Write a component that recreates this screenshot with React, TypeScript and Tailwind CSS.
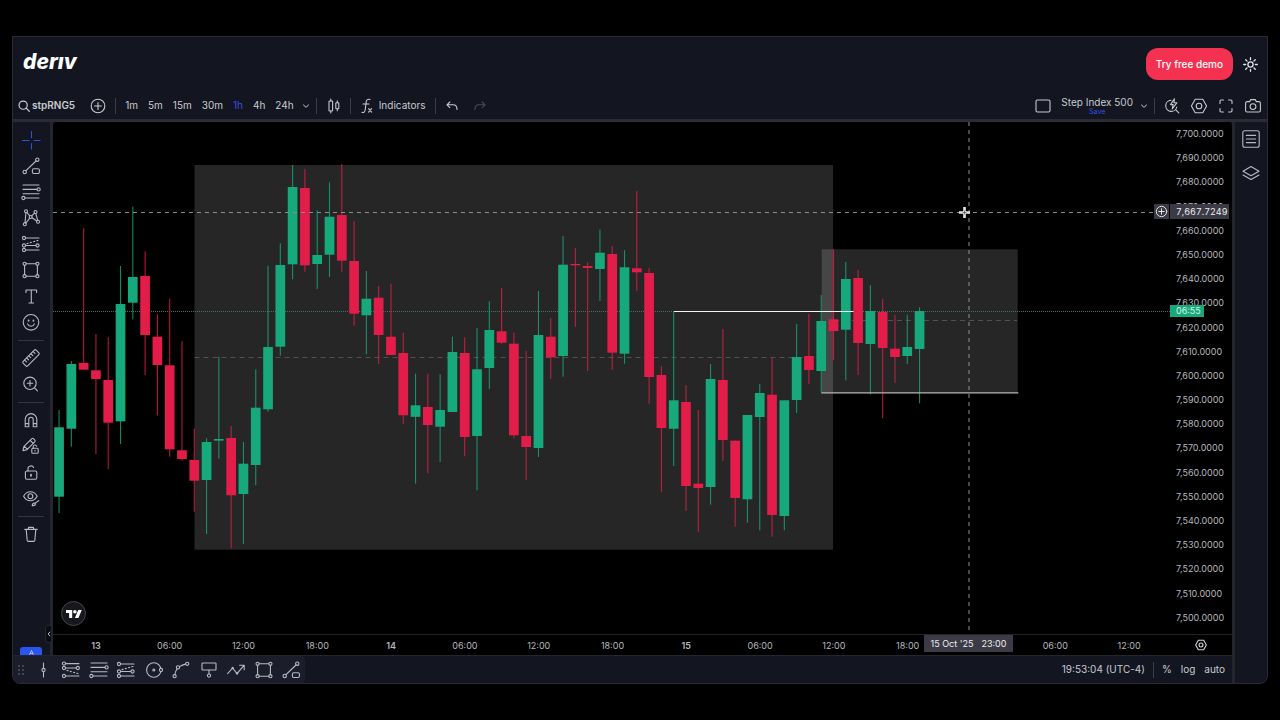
import type { ReactNode } from "react";

type Candle = ["u" | "d", number, number, number, number];

// direction, high, body top, body bottom, low (in plot units)
const CANDLES: Candle[] = [
  ["u", 410, 427.3, 496.7, 513],
  ["u", 361, 364, 428.7, 446.7],
  ["d", 228.3, 363, 369.7, 369.7],
  ["d", 334, 370.3, 379, 454],
  ["d", 337.3, 380, 422.7, 469.3],
  ["u", 266, 304, 421.3, 444],
  ["u", 206.7, 277, 302.7, 319.3],
  ["d", 251.3, 276, 335, 375],
  ["d", 314.3, 336.7, 365, 415.3],
  ["d", 298.7, 365.3, 449.3, 456.7],
  ["d", 341.3, 450.3, 459, 460.7],
  ["d", 428.7, 460, 480.7, 511.7],
  ["u", 438.3, 442, 480, 534],
  ["u", 356.7, 439, 440.6, 458.7],
  ["d", 426, 438, 495.3, 548.3],
  ["u", 442, 463.7, 494, 544],
  ["u", 369.3, 407.7, 465, 485.3],
  ["u", 265.7, 347, 409.3, 411.7],
  ["u", 243.3, 265, 346.7, 355.7],
  ["u", 165, 187, 264.3, 279.3],
  ["d", 169, 188, 265.3, 271.7],
  ["u", 210.3, 255, 264, 289],
  ["u", 182.3, 216.7, 254.7, 277],
  ["d", 164, 215, 260.7, 271.7],
  ["d", 221.3, 261, 313.7, 325.7],
  ["u", 271, 298.7, 315.3, 354.3],
  ["d", 286, 297.7, 335, 364],
  ["d", 283.7, 336.7, 355, 355],
  ["d", 332.7, 353, 415.3, 424],
  ["u", 373.7, 405.3, 416.8, 483.7],
  ["d", 373.7, 407, 425, 473.3],
  ["u", 374.3, 410, 426.7, 462],
  ["u", 336.7, 352, 412, 412],
  ["d", 337.3, 353, 437, 456.3],
  ["u", 328, 369.3, 436, 490.3],
  ["u", 301.3, 330, 368, 389],
  ["d", 288, 331.3, 342.7, 343.7],
  ["d", 332.7, 343.7, 435.3, 438.3],
  ["d", 351, 436, 447, 480.3],
  ["u", 291, 335, 448, 457],
  ["d", 318, 336.7, 357.3, 378.7],
  ["u", 236, 264.7, 356, 376.7],
  ["d", 248, 264, 265.3, 327],
  ["d", 262.3, 266, 268, 371],
  ["u", 229.7, 252.7, 269, 301],
  ["d", 246, 254, 352.7, 369.7],
  ["u", 250.3, 267.3, 353.7, 363.7],
  ["d", 191, 268.3, 272.3, 290.7],
  ["d", 268, 273, 377, 403.7],
  ["d", 366.3, 375, 428, 491.7],
  ["u", 311.3, 400.3, 428.7, 466],
  ["d", 385, 402, 486, 511],
  ["d", 410, 483.7, 488, 531.7],
  ["u", 364, 379, 487, 504.7],
  ["d", 329, 380, 440, 461],
  ["d", 440.3, 440.7, 498, 526.7],
  ["u", 415, 415, 499.3, 522.7],
  ["u", 384, 393, 417, 530.3],
  ["d", 357.7, 394.7, 515, 536.7],
  ["u", 400.3, 400.3, 516, 530.3],
  ["u", 324, 357, 400, 413],
  ["d", 313.7, 356, 370, 384],
  ["u", 295, 321, 371, 392.3],
  ["d", 249.3, 319.3, 331, 360],
  ["u", 262, 279, 329.7, 380.3],
  ["d", 269.7, 278, 343, 375],
  ["u", 285.3, 311, 344, 394.3],
  ["d", 298.7, 312, 348, 418.3],
  ["d", 314.7, 348.7, 357, 383],
  ["u", 314.7, 347, 356, 364],
  ["u", 307.3, 311, 349, 403.3],
];

const FIRST_X = 59;
const STEP = 12.293;

const PRICES = Array.from(
  { length: 21 },
  (_, i) => `7,${700 - i * 10}.0000`,
);

const TIMES = [
  "13", "06:00", "12:00", "18:00",
  "14", "06:00", "12:00", "18:00",
  "15", "06:00", "12:00", "18:00",
  "", "06:00", "12:00",
];

const INTERVALS = ["1m", "5m", "15m", "30m", "1h", "4h", "24h"];

function Icon({ children, className = "size-5" }: { children: ReactNode; className?: string }) {
  return (
    <svg
      viewBox="0 0 20 20"
      className={className}
      fill="none"
      stroke="currentColor"
      strokeWidth="1.1"
      strokeLinecap="round"
      strokeLinejoin="round"
      aria-hidden="true"
    >
      {children}
    </svg>
  );
}

const CrossIcon = () => (
  <Icon>
    <path d="M10.500 1.500v6M10.500 13.500v5.500M1.500 10.500h6.500M13 10.500h6" />
  </Icon>
);
const TrendIcon = () => (
  <Icon>
    <circle cx="16.3" cy="3.7" r="1.7" />
    <circle cx="3.7" cy="16" r="1.7" />
    <path d="M15 5 5 14.7" />
    <rect x="11.4" y="12.7" width="7" height="4.8" rx="1.4" />
  </Icon>
);
const FibIcon = () => (
  <Icon>
    <path d="M2 3h16M2 7.4h13.9M2 11.7h16M4.1 16H18" />
    <circle cx="17.6" cy="7.4" r="1.6" />
    <circle cx="2.4" cy="16" r="1.6" />
  </Icon>
);
const PatternIcon = () => (
  <Icon>
    <circle cx="5" cy="3.2" r="1.5" />
    <circle cx="14.5" cy="4" r="1.5" />
    <circle cx="9.7" cy="9" r="1.5" />
    <circle cx="3.8" cy="16.2" r="1.5" />
    <circle cx="17" cy="13.8" r="1.5" />
    <path d="M4.9 4.7 4 14.7M5.9 4.4l2.9 3.5M10.7 7.8l2.8-2.7M14.8 5.5l1.9 6.8M8.7 10.2l-3.9 4.9M11.1 9.8l4.6 3.2" />
  </Icon>
);
const ForecastIcon = () => (
  <Icon>
    <circle cx="3" cy="4" r="1.6" />
    <circle cx="3" cy="11.5" r="1.6" />
    <circle cx="3" cy="16" r="1.6" />
    <circle cx="16.5" cy="11.5" r="1.6" />
    <path d="M4.6 4H18M4.6 11.5h10.3M4.6 16H18" />
    <path d="M6 9.600 17 6.400" strokeDasharray="1.2 2.2" />
  </Icon>
);
const PositionIcon = () => (
  <Icon>
    <circle cx="3" cy="3.6" r="1.6" />
    <circle cx="16.8" cy="8" r="1.6" />
    <circle cx="3" cy="8" r="1.6" />
    <circle cx="3" cy="16" r="1.6" />
    <path d="M4.6 3.6H18M4.6 8h10.6M4.6 16H18" />
    <path d="m6 10.4 11 3.2" strokeDasharray="1.2 2.2" />
  </Icon>
);
const RectIcon = () => (
  <Icon>
    <circle cx="3.6" cy="3.8" r="1.6" />
    <circle cx="16.4" cy="3.8" r="1.6" />
    <circle cx="3.6" cy="16.2" r="1.6" />
    <circle cx="16.4" cy="16.2" r="1.6" />
    <path d="M5.2 3.8h9.6M5.2 16.2h9.6M3.6 5.4v9.2M16.4 5.4v9.2" />
  </Icon>
);
const TextIcon = () => (
  <Icon>
    <path d="M5 6.400V4h10.600v2.400M10.300 4v13M8 17h4.600" />
  </Icon>
);
const SmileIcon = () => (
  <Icon>
    <circle cx="10" cy="10.3" r="7.8" />
    <path d="M7.6 8.300v.6M12.4 8.300v.6" strokeWidth="1.6" />
    <path d="M6.6 11.900c.6 1.600 1.800 2.300 3.400 2.300s2.800-.7 3.400-2.300" />
  </Icon>
);
const RulerIcon = () => (
  <Icon>
    <g transform="rotate(-45 10 10)">
      <rect x="0.8" y="6.8" width="18.4" height="6.4" rx="1.3" />
      <path d="M4 7v2.6M7 7v2.6M10 7v2.6M13 7v2.6M16 7v2.6" />
    </g>
  </Icon>
);
const ZoomInIcon = () => (
  <Icon>
    <circle cx="9" cy="9.3" r="6.2" />
    <path d="m13.5 13.8 3 3M9 6.6V12M6.3 9.3h5.4" />
  </Icon>
);
const MagnetIcon = () => (
  <Icon>
    <path d="M4.2 16.8V9.4a5.8 5.8 0 0 1 11.6 0v7.4h-3.6V9.5a2.2 2.2 0 0 0-4.4 0v7.3zM4.2 13.6h3.6M12.2 13.6h3.6" />
  </Icon>
);
const PencilLockIcon = () => (
  <Icon>
    <path d="m2 14.6.8-4L10.6 2.8a1.5 1.5 0 0 1 2.1 0l1 1a1.5 1.5 0 0 1 0 2.1L6 13.7zM9.2 4.4l3 3M3.4 10.4l3 3" />
    <rect x="10.8" y="12.2" width="6.4" height="5" rx="1" />
    <path d="M12.2 12.2v-1.6c0-2 3-2.2 3.4-.4M14 14.4v.6" />
  </Icon>
);
const LockIcon = () => (
  <Icon>
    <rect x="4.400" y="9" width="11.400" height="8.200" rx="1.400" />
    <path d="M7 9V6.800c0-3.400 4.600-3.800 5.600-1.200" />
    <path d="M10 12.600v1.200" strokeWidth="1.800" />
  </Icon>
);
const EyeIcon = () => (
  <Icon>
    <path d="M2.6 8.2c3.2-6 10.4-6 13.6 0-3.2 6-10.4 6-13.6 0z" />
    <circle cx="9.4" cy="8.2" r="2.4" />
    <path d="M11.2 17.6c.2-1.8 1-2.6 2-2.6s1.6 1.2.8 2c-.6.6-1.6.7-2.8.6zM14.4 15l3.4-2.4" />
  </Icon>
);
const TrashIcon = () => (
  <Icon>
    <path d="M3.800 5.400h12.400M7.200 5.400l.4-2h4.800l.4 2M5.200 5.400l1 11c.1.7.5 1 1.100 1h5.400c.6 0 1-.3 1.100-1l1-11" />
  </Icon>
);
const VLineIcon = () => (
  <Icon>
    <circle cx="9.500" cy="10" r="1.6" />
    <path d="M9.500 3v5.400M9.500 11.600V17" />
  </Icon>
);
const CircleIcon = () => (
  <Icon>
    <circle cx="9.8" cy="10" r="7.2" />
    <circle cx="9.8" cy="10" r="1" />
    <circle cx="17" cy="10" r="1.6" className="fill-[#1b1e2a]" />
  </Icon>
);
const CurveIcon = () => (
  <Icon>
    <circle cx="3.6" cy="16.2" r="1.6" />
    <circle cx="7" cy="7.4" r="1.6" />
    <circle cx="16.2" cy="3.8" r="1.6" />
    <path d="M3.9 14.6C4.3 12 5 10.4 6.1 8.8M8.5 6.6c1.8-1.2 3.6-2 6.1-2.5" />
  </Icon>
);
const NoteIcon = () => (
  <Icon>
    <rect x="3" y="3" width="14" height="7" rx="0.6" />
    <circle cx="10" cy="15.6" r="1.6" />
    <path d="M10 10v4" />
  </Icon>
);
const ZigzagIcon = () => (
  <Icon>
    <path d="m1.6 13.6 5-5.6 4.4 5.6 7-8.2M13.6 5.2h4.6v4.6" />
    <path d="m6.6 8 .1.1M11 13.4l.1.1" strokeWidth="2.4" />
  </Icon>
);
const GearIcon = ({ className, strokeWidth = 1.1 }: { className?: string; strokeWidth?: number }) => (
  <Icon className={className}>
    <g strokeWidth={strokeWidth}>
      <path d="M6.2 3.2h7.6L17.6 10l-3.8 6.8H6.2L2.4 10z" />
      <circle cx="10" cy="10" r="2.8" />
    </g>
  </Icon>
);

const TOOL_GROUPS: { label: string; icon: ReactNode; active?: boolean }[][] = [
  [
    { label: "Cross", icon: <CrossIcon />, active: true },
    { label: "Trend line", icon: <TrendIcon /> },
    { label: "Fib retracement", icon: <FibIcon /> },
    { label: "Patterns", icon: <PatternIcon /> },
    { label: "Forecast", icon: <ForecastIcon /> },
    { label: "Rectangle", icon: <RectIcon /> },
    { label: "Text", icon: <TextIcon /> },
    { label: "Icons", icon: <SmileIcon /> },
  ],
  [
    { label: "Measure", icon: <RulerIcon /> },
    { label: "Zoom in", icon: <ZoomInIcon /> },
  ],
  [
    { label: "Magnet", icon: <MagnetIcon /> },
    { label: "Stay in drawing mode", icon: <PencilLockIcon /> },
    { label: "Lock drawings", icon: <LockIcon /> },
    { label: "Hide drawings", icon: <EyeIcon /> },
  ],
  [{ label: "Remove", icon: <TrashIcon /> }],
];

const FAVORITES: { label: string; icon: ReactNode }[] = [
  { label: "Vertical line", icon: <VLineIcon /> },
  { label: "Long position", icon: <PositionIcon /> },
  { label: "Fib lines", icon: <FibIcon /> },
  { label: "Short position", icon: <ForecastIcon /> },
  { label: "Circle", icon: <CircleIcon /> },
  { label: "Curve", icon: <CurveIcon /> },
  { label: "Callout", icon: <NoteIcon /> },
  { label: "Path", icon: <ZigzagIcon /> },
  { label: "Rectangle", icon: <RectIcon /> },
  { label: "Trend line", icon: <TrendIcon /> },
];

function Divider() {
  return <span className="h-4 w-px shrink-0 bg-[#3a3c48]" />;
}

function Header() {
  return (
    <header className="flex h-[54px] items-center justify-between pr-[7px] pl-[10px]">
      <a
        href="#home"
        aria-label="deriv"
        className="pb-1 text-[21px] leading-6 font-extrabold text-white italic"
      >
        derıv
      </a>
      <div className="flex items-center gap-[7px]">
        <button className="h-8 rounded-xl bg-[#f53151] px-[10px] text-[10px] font-medium text-white">
          Try free demo
        </button>
        <button aria-label="Theme" className="text-[#e4e5ea]">
          <Icon>
            <circle cx="10.500" cy="10.500" r="2.600" strokeWidth="1.300" />
            <path
              strokeWidth="1.300"
              d="M10.500 3.700v2M10.500 15.300v2M3.700 10.500h2M15.300 10.500h2M5.700 5.700l1.400 1.400M13.900 13.900l1.400 1.400M5.700 15.300l1.400-1.400M13.900 7.100l1.400-1.400"
            />
          </Icon>
        </button>
      </div>
    </header>
  );
}

function Toolbar() {
  return (
    <div className="flex h-7 items-center justify-between pt-px pr-1 pl-[5px] text-[10px] text-[#c8cad1]">
      <div className="flex items-center">
        <button className="flex items-center gap-[2px] font-semibold">
          <Icon className="size-3">
            <circle cx="8.6" cy="8.6" r="6.8" strokeWidth="2" />
            <path d="m13.6 13.6 5.2 5.2" strokeWidth="2" />
          </Icon>
          stpRNG5
        </button>
        <button aria-label="Compare" className="ml-[13px]">
          <Icon>
            <circle cx="10" cy="10" r="6.8" />
            <path d="M10 6.6v6.8M6.6 10h6.8" />
          </Icon>
        </button>
        <span className="ml-[7px] flex"><Divider /></span>
        <div className="ml-[9px] flex gap-[10px]">
          {INTERVALS.map((t) => (
            <button key={t} className={t === "1h" ? "text-[#3350e0]" : ""}>
              {t}
            </button>
          ))}
        </div>
        <button aria-label="More intervals" className="ml-[7px]">
          <Icon className="size-[10px]">
            <path d="m5 8 5 4.6L15 8" strokeWidth="2" />
          </Icon>
        </button>
        <span className="ml-[5px] flex"><Divider /></span>
        <button aria-label="Chart type" className="ml-[7px]">
          <Icon>
            <rect x="5" y="5" width="3.6" height="10" rx="0.6" />
            <rect x="11.8" y="6.8" width="3" height="6" rx="0.6" />
            <path d="M6.8 3v2M6.8 15v2M13.3 4.8v2M13.3 12.8v2" />
          </Icon>
        </button>
        <span className="ml-[6px] flex"><Divider /></span>
        <button className="ml-[6px] flex items-center gap-[2px]">
          <Icon>
            <path d="M13 3.600c-2.200-.8-3.600.2-3.800 2.200L8.200 13.800c-.3 2.200-1.400 3-3.200 2.600M6 8h6M11.600 12.600l3 3.600M14.600 12.600l-3 3.600" />
          </Icon>
          Indicators
        </button>
        <span className="ml-[10px] flex"><Divider /></span>
        <button aria-label="Undo" className="ml-[6px]">
          <Icon>
            <path d="M7.800 6 5 8.800l2.800 2.800M5 8.800h6c2.400 0 4 1.800 4 4.600" />
          </Icon>
        </button>
        <button aria-label="Redo" className="ml-2 text-[#484a56]">
          <Icon>
            <path d="M12.200 6 15 8.800l-2.800 2.800M15 8.800H9c-2.400 0-4 1.800-4 4.600" />
          </Icon>
        </button>
      </div>

      <div className="flex items-center">
        <button aria-label="Layout">
          <Icon>
            <rect x="3" y="4" width="14" height="12" rx="1.400" />
          </Icon>
        </button>
        <button className="ml-2 flex flex-col items-center">
          <span className="leading-3">Step Index 500</span>
          <span className="text-[7px] leading-[7px] text-[#3350e0]">Save</span>
        </button>
        <button aria-label="Layouts menu" className="ml-[6px]">
          <Icon className="size-[10px]">
            <path d="m5 8 5 4.600L15 8" strokeWidth="2" />
          </Icon>
        </button>
        <span className="ml-[5px] flex"><Divider /></span>
        <div className="ml-[7px] flex gap-[7px]">
          <button aria-label="Quick search">
            <Icon>
              <path d="M9 4.200a5.600 5.600 0 1 0 5.800 6.800M13.600 13.600l3.200 3.200" />
              <path d="M12.400 2.800 8.600 8.600h2.600l-1 4.400 4.600-6.200h-2.800z" />
            </Icon>
          </button>
          <button aria-label="Settings"><GearIcon /></button>
          <button aria-label="Fullscreen">
            <Icon>
              <path d="M4 7.400V5.200C4 4.400 4.400 4 5.200 4h2.200M12.600 4h2.200c.8 0 1.200.4 1.200 1.200v2.200M16 12.600v2.200c0 .8-.4 1.200-1.200 1.200h-2.200M7.400 16H5.200c-.8 0-1.200-.4-1.200-1.200v-2.200" />
            </Icon>
          </button>
          <button aria-label="Snapshot">
            <Icon>
              <path d="M6.600 5.600 7.800 3.600h4.400l1.200 2h2.400c1 0 1.600.6 1.600 1.600v7.200c0 1-.6 1.600-1.600 1.600H4.200c-1 0-1.600-.6-1.600-1.600V7.200c0-1 .6-1.600 1.600-1.600z" />
              <circle cx="10" cy="10.600" r="2.900" />
            </Icon>
          </button>
        </div>
      </div>
    </div>
  );
}

function Sidebar() {
  return (
    <nav className="relative flex w-[40px] shrink-0 flex-col items-center border-r-[3px] border-[#25252d] bg-[#131520] pt-[5px] pr-px text-[#b8bac3]">
      {TOOL_GROUPS.map((group, i) => (
        <div key={i} className="flex flex-col items-center">
          {i > 0 && (
            <div className="flex h-[10px] items-center">
              <span className="h-px w-[26px] bg-[#32343f]" />
            </div>
          )}
          {group.map((tool) => (
            <button
              key={tool.label}
              aria-label={tool.label}
              className={
                tool.active
                  ? "flex h-[26px] items-center text-[#3350e0]"
                  : "flex h-[26px] items-center"
              }
            >
              {tool.icon}
            </button>
          ))}
        </div>
      ))}
      <button
        aria-label="Show favorites"
        className="mt-auto flex h-2 w-[22px] items-end justify-center rounded-t-[3px] bg-[#2b55f0] text-white"
      >
        <Icon className="size-[7px]">
          <path d="m5 18 5-11 5 11M6.500 15.500h7" strokeWidth="1.600" />
        </Icon>
      </button>
      <button
        aria-label="Hide toolbar"
        className="absolute right-[-2px] bottom-3 flex h-[18px] w-[7px] items-center justify-center rounded-l-[3px] border border-[#25252d] bg-[#0c0d13]"
      >
        <svg viewBox="0 0 4 6" className="h-[6px] w-1 shrink-0" fill="none" stroke="currentColor">
          <path d="M3 .8 1.200 3 3 5.200" />
        </svg>
      </button>
    </nav>
  );
}

function Plot() {
  return (
    <svg
      viewBox="53 122 1117 512"
      preserveAspectRatio="none"
      className="absolute inset-0 size-full"
      role="img"
      aria-label="Candlestick chart"
    >
      <rect x="194.500" y="165" width="638.500" height="384.700" fill="#fff" fillOpacity="0.148" />
      <rect x="821.700" y="249.300" width="196" height="143.500" fill="#fff" fillOpacity="0.148" />
      <path d="M194.500 357.500H822" stroke="#505050" strokeDasharray="5 4" />
      <path d="M834 320.500h183" stroke="#505050" strokeDasharray="5 4" />
      <path d="M53 311.500h1117" stroke="#3f7363" strokeDasharray="1 1" />
      {CANDLES.map(([dir, high, top, bottom, low], i) => {
        const x = FIRST_X + STEP * i;
        const color = dir === "u" ? "#17a97b" : "#e31d49";
        return (
          <g key={i} fill={color}>
            <rect x={x - 0.500} y={high} width="1.100" height={low - high} fillOpacity="0.800" />
            <rect x={x - 4.800} y={top} width="9.700" height={bottom - top} />
          </g>
        );
      })}
      <path d="M674 311.500h179.500" stroke="#f2f5f3" strokeWidth="1.100" />
      <path d="M821.300 392.900h197" stroke="#b8b8b8" strokeWidth="1.400" />
      <path d="M53 212.500h1101" stroke="#8c8c8c" strokeDasharray="4 4" />
      <path d="M969 122v512" stroke="#909090" strokeDasharray="4 4" />
      <path d="M964.500 207v11M959 212.500h11" stroke="#e8e8e8" strokeWidth="2.600" />
      <path d="M964.500 210.500v4M962.500 212.500h4" stroke="#555" strokeWidth="0.800" />
    </svg>
  );
}

function ChartArea() {
  return (
    <main className="flex min-w-0 flex-1 flex-col rounded-t bg-black">
      <div className="flex flex-1">
        <div className="relative flex-1">
          <Plot />
          <a
            href="#tradingview"
            aria-label="TradingView"
            className="absolute bottom-2 left-2 flex size-[25px] items-center justify-center rounded-full border border-[#45464c] bg-[#17181d]"
          >
            <svg viewBox="0 4 36 18" className="h-2 w-4" fill="#fff">
              <path d="M14 22H7V11H0V4h14v18zM28 22h-8l7.500-18h8L28 22z" />
              <circle cx="20" cy="8" r="4" />
            </svg>
          </a>
          <button
            aria-label="Add alert at price"
            className="absolute top-[82px] right-px flex h-[15px] w-[15px] items-center justify-center bg-[#3b3b45] text-[#e6e6ea]"
          >
            <Icon className="size-[13px] shrink-0">
              <circle cx="10" cy="10" r="8" strokeWidth="1.500" />
              <path d="M10 5.800v8.400M5.800 10h8.400" strokeWidth="1.500" />
            </Icon>
          </button>
        </div>
        <div className="relative flex w-[62px] shrink-0 flex-col justify-between pt-[6px] pb-[10px] pl-[6px] text-[9px] leading-3 text-[#b6b7bc]">
          {PRICES.map((p) => (
            <span key={p}>{p}</span>
          ))}
          <span className="absolute top-[82px] left-0 h-[15px] w-[59px] bg-[#3b3b45] pl-[6px] leading-[15px] text-[#eeeef2] tabular-nums">
            7,667.7249
          </span>
          <span className="absolute top-[183px] left-0 h-3 w-[34px] bg-[#17a97b] pl-[6px] text-[#d3f5e8]">
            06:55
          </span>
        </div>
      </div>
      <div className="relative flex h-[21px] border-t border-[#242428] text-[9px] text-[#b6b7bc]">
        <div className="grid flex-1 grid-cols-15 items-center pt-px pr-1 pl-[6px]">
          {TIMES.map((t, i) => (
            <span
              key={i}
              className={t.length === 2 ? "text-center font-semibold" : "text-center"}
            >
              {t}
            </span>
          ))}
        </div>
        <div className="flex w-[62px] items-center justify-center">
          <button aria-label="Axis settings" className="text-[#d0d1d6]">
            <GearIcon className="size-[14px]" strokeWidth={1.6} />
          </button>
        </div>
        <span className="absolute top-0 right-[219px] flex h-[17px] w-[89px] items-center justify-center gap-2 bg-[#3b3b45] pt-px text-[#eeeef2]">
          <span>15 Oct '25</span>
          <span>23:00</span>
        </span>
      </div>
    </main>
  );
}

function BottomBar() {
  return (
    <footer className="flex h-7 items-center justify-between border-t border-[#25252d] text-[10px] text-[#c8cad1]">
      <div className="flex h-full items-center rounded-r bg-[#1b1e2a] pl-[5px] text-[#b8bac3]">
        <svg viewBox="0 0 6 10" className="mr-[6px] h-[10px] w-[6px]" fill="#555866" aria-hidden="true">
          {[1, 5, 9].map((y) => (
            <g key={y}>
              <circle cx="1" cy={y} r="0.900" />
              <circle cx="5" cy={y} r="0.900" />
            </g>
          ))}
        </svg>
        <div className="grid w-[275px] grid-cols-10">
          {FAVORITES.map((f) => (
            <button key={f.label} aria-label={f.label} className="flex justify-center">
              {f.icon}
            </button>
          ))}
        </div>
      </div>
      <div className="flex items-center pr-[7px]">
        <button>19:53:04 (UTC-4)</button>
        <span className="mx-2 flex"><Divider /></span>
        <div className="flex gap-[9px]">
          <button>%</button>
          <button>log</button>
          <button>auto</button>
        </div>
      </div>
    </footer>
  );
}

export default function App() {
  return (
    <div className="flex min-h-screen flex-col bg-black px-3 py-9 font-['Inter','Liberation_Sans',sans-serif]">
      <div className="flex flex-1 flex-col overflow-hidden rounded-b-lg border border-[#2a2a30] bg-[#131520]">
        <Header />
        <Toolbar />
        <div className="flex flex-1 border-t-[3px] border-[#2b2b36]">
          <div className="flex min-w-0 flex-1 flex-col">
            <div className="flex flex-1">
              <Sidebar />
              <ChartArea />
            </div>
            <BottomBar />
          </div>
          <aside className="flex w-[35px] shrink-0 flex-col items-center gap-[14px] border-l-[3px] border-[#25252d] pt-[7px] text-[#b8bac3]">
            <button aria-label="Watchlist">
              <Icon>
                <rect x="1.800" y="1.800" width="16.400" height="16.400" rx="2" />
                <path d="M5.400 6.400h9.200M5.400 10h9.200M5.400 13.600h9.200" />
              </Icon>
            </button>
            <button aria-label="Object tree">
              <Icon>
                <path d="m10 3.600 8 4.600-8 4.600-8-4.600zM2 12l8 4.600 8-4.600" />
              </Icon>
            </button>
          </aside>
        </div>
      </div>
    </div>
  );
}
